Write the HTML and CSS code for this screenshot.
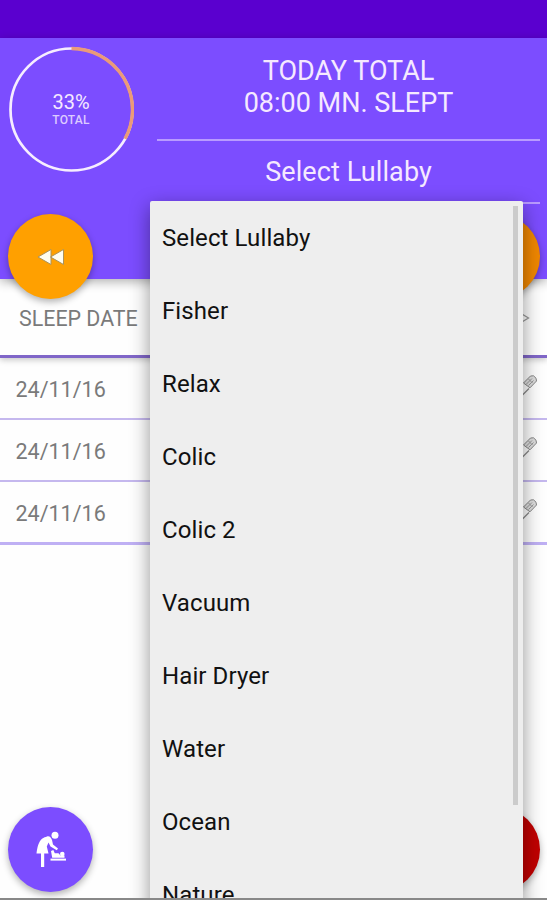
FILE: index.html
```html
<!DOCTYPE html>
<html lang="en">
<head>
  <meta charset="UTF-8" />
  <meta name="viewport" content="width=device-width, initial-scale=1.0"/>
  <title>Baby Sleep</title>
  <link rel="stylesheet" href="styles.css">
</head>
<body>
  <div class="screen">
    <div class="status-bar"></div>

    <header class="header">
      <div class="progress">
        <svg class="ring" viewBox="0 0 126 126">
          <circle cx="63.5" cy="63.5" r="61" fill="none" stroke="#f6edff" stroke-width="2.7"/>
          <path d="M63.5 2.5 A61 61 0 0 1 117 92.8" fill="none" stroke="#eb9a78" stroke-width="3.4"/>
        </svg>
        <div class="progress-text">
          <span class="percent">33%</span>
          <span class="percent-label">TOTAL</span>
        </div>
      </div>
      <div class="summary">
        <div class="total">TODAY TOTAL<br/>08:00 MN. SLEPT</div>
        <div class="spinner">Select Lullaby</div>
      </div>
      <button class="fab rewind" aria-label="Previous">
        <svg width="30" height="20" viewBox="0 0 30 20">
          <path d="M15 2.5 L2 10 L15 17.5Z M27.5 2.5 L14.5 10 L27.5 17.5Z" fill="#fffdf0" stroke="#a9925c" stroke-width="1"/>
        </svg>
      </button>
      <button class="fab forward" aria-label="Next"></button>
    </header>

    <main class="sleep-list">
      <div class="list-head">
        <span>SLEEP DATE</span>
        <svg class="chevron" width="10" height="12" viewBox="0 0 10 12">
          <path d="M1 1.5 L8.5 6 L1 10.5" fill="none" stroke="#999" stroke-width="1.3"/>
        </svg>
      </div>
      <div class="row">
        <span>24/11/16</span>
        <svg class="pencil" width="22" height="24" viewBox="0 0 22 24"><use href="#pencil"/></svg>
      </div>
      <div class="row">
        <span>24/11/16</span>
        <svg class="pencil" width="22" height="24" viewBox="0 0 22 24"><use href="#pencil"/></svg>
      </div>
      <div class="row last">
        <span>24/11/16</span>
        <svg class="pencil" width="22" height="24" viewBox="0 0 22 24"><use href="#pencil"/></svg>
      </div>
    </main>

    <button class="fab baby" aria-label="Baby care">
      <svg width="32" height="37" viewBox="0 0 32 37">
        <g fill="#fff">
          <circle cx="20" cy="4.2" r="3.5"/>
          <path d="M12 5.5 C14.5 4.8 16 6.5 17 9 L18 13.5 L23 17.5 L21.8 19.3 L15.5 15.5 L13.5 11.5 L11.8 15.5 L13.5 22.5 L1.5 22.5 C2.2 17 3.5 10.5 7 7.8 C8.8 6.5 10.5 6 12 5.5Z"/>
          <path d="M6 22 H9.2 V36 H6Z"/>
          <path d="M16 20 L18.3 19 L19.8 22.3 H23.5 L25.5 24.5 H29.5 V26.8 H17.2Z"/>
          <circle cx="27.3" cy="23" r="2.3"/>
          <path d="M15.5 27.6 H31 V29.6 H15.5Z"/>
        </g>
      </svg>
    </button>
    <button class="fab stop" aria-label="Stop"></button>

    <!-- Lullaby dropdown -->
    <div class="dropdown">
      <ul>
        <li>Select Lullaby</li>
        <li>Fisher</li>
        <li>Relax</li>
        <li>Colic</li>
        <li>Colic 2</li>
        <li>Vacuum</li>
        <li>Hair Dryer</li>
        <li>Water</li>
        <li>Ocean</li>
        <li>Nature</li>
      </ul>
      <div class="scrollbar"></div>
    </div>
    <div class="bottom-edge"></div>
  </div>

  <svg class="defs">
    <symbol id="pencil" viewBox="0 0 22 24">
      <path d="M3 22.5 L10 15.5" stroke="#888" stroke-width="1.3" fill="none"/>
      <path d="M4.5 10 L11.5 3 L14.5 2.8 Q18 5 17.5 8 L11 14.8 Z" fill="#dedede" stroke="#858585" stroke-width="1"/>
      <path d="M7 11.5 L13 5.5 M9.5 12.5 L14.5 7.5 M9.5 6 L13.5 10" stroke="#999" stroke-width="1" fill="none"/>
    </symbol>
  </svg>
</body>
</html>
```
FILE: styles.css
```css
* {
  box-sizing: border-box;
}
body {
  margin: 0;
  font-family: Roboto, sans-serif;
  background: #fff;
}
.screen {
  position: relative;
  width: 100%;
  height: 900px;
  overflow: hidden;
  background: #fefefe;
}
.status-bar {
  height: 38px;
  background: #5a00cf;
}
.header {
  position: relative;
  display: flex;
  height: 241px;
  padding: 0 7px 0 8px;
  gap: 23px;
  background: #7c4dff;
  color: #f5e9ff;
  box-shadow: 0 3px 10px rgba(0,0,0,0.3);
  z-index: 1;
}
.progress {
  display: grid;
  width: 126px;
  height: 126px;
  margin-top: 8px;
}
.ring, .progress-text {
  grid-area: 1 / 1;
}
.progress-text {
  display: flex;
  flex-direction: column;
  align-items: center;
  padding-top: 45px;
}
.percent {
  font-size: 20px;
  line-height: 23px;
}
.percent-label {
  font-size: 12px;
  line-height: 12px;
  font-weight: 500;
  letter-spacing: 0.2px;
  color: #dccbff;
}
.summary {
  flex: 1;
  text-align: center;
  font-size: 27px;
}
.total {
  height: 103px;
  padding-top: 17px;
  line-height: 32px;
  border-bottom: 2px solid #b99bff;
}
.spinner {
  height: 63px;
  line-height: 63px;
  letter-spacing: 0.1px;
  border-bottom: 2px solid #b99bff;
}
.fab {
  position: absolute;
  display: flex;
  align-items: center;
  justify-content: center;
  width: 85px;
  height: 85px;
  padding: 0;
  border: 0;
  border-radius: 50%;
  box-shadow: 0 3px 7px rgba(0,0,0,0.3);
}
.rewind {
  left: 8px;
  bottom: -20px;
  background: #ffa000;
}
.forward {
  right: 7px;
  bottom: -20px;
  background: #f08700;
}
.baby {
  left: 8px;
  top: 807px;
  background: #7c4dff;
}
.stop {
  right: 7px;
  top: 807px;
  background: #c00000;
}
.list-head, .row {
  display: flex;
  align-items: center;
  justify-content: space-between;
  color: #7a7a7a;
}
.list-head {
  height: 79px;
  padding: 2px 17px 0 19px;
  font-size: 21.4px;
  border-bottom: 3px solid #8066c8;
  box-shadow: 0 2px 6px rgba(0,0,0,0.22);
}
.row {
  height: 62px;
  padding: 3px 6px 0 15.5px;
  font-size: 21.5px;
  border-bottom: 2px solid #c5b8ee;
}
.pencil {
  margin-top: -9px;
}
.last {
  height: 63px;
  border-bottom: 3px solid #bfb0f4;
}
.dropdown {
  position: absolute;
  left: 150px;
  top: 201px;
  width: 373px;
  height: 720px;
  background: #eee;
  border-radius: 2px;
  box-shadow: 0 6px 20px rgba(0,0,0,0.42);
  z-index: 2;
}
.dropdown ul {
  margin: 0;
  padding: 1px 0 0 12px;
  list-style: none;
}
.dropdown li {
  height: 73px;
  line-height: 73px;
  font-size: 24px;
  letter-spacing: 0.1px;
  color: #111;
}
.scrollbar {
  position: absolute;
  right: 5px;
  top: 5px;
  width: 5px;
  height: 599px;
  background: #cbcbcb;
}
.bottom-edge {
  position: absolute;
  left: 0;
  right: 0;
  bottom: 0;
  height: 2px;
  background: #888;
  z-index: 3;
}
.defs {
  display: none;
}
```
